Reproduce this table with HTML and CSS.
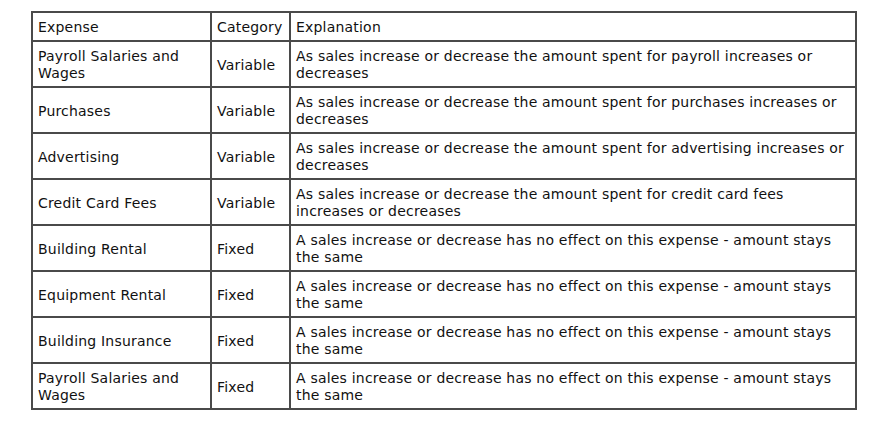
FILE: index.html
```html
<!DOCTYPE html>
<html>
<head>
<meta charset="utf-8">
<link rel="stylesheet" href="styles.css">
</head>
<body>
<table class="expenses">
  <colgroup>
    <col class="c-expense">
    <col class="c-category">
    <col class="c-explanation">
  </colgroup>
  <tr class="head"><td>Expense</td><td>Category</td><td>Explanation</td></tr>
  <tr><td>Payroll Salaries and Wages</td><td>Variable</td><td>As sales increase or decrease the amount spent for payroll increases or decreases</td></tr>
  <tr><td>Purchases</td><td>Variable</td><td>As sales increase or decrease the amount spent for purchases increases or decreases</td></tr>
  <tr><td>Advertising</td><td>Variable</td><td>As sales increase or decrease the amount spent for advertising increases or decreases</td></tr>
  <tr><td>Credit Card Fees</td><td>Variable</td><td>As sales increase or decrease the amount spent for credit card fees increases or decreases</td></tr>
  <tr><td>Building Rental</td><td>Fixed</td><td>A sales increase or decrease has no effect on this expense - amount stays the same</td></tr>
  <tr><td>Equipment Rental</td><td>Fixed</td><td>A sales increase or decrease has no effect on this expense - amount stays the same</td></tr>
  <tr><td>Building Insurance</td><td>Fixed</td><td>A sales increase or decrease has no effect on this expense - amount stays the same</td></tr>
  <tr><td>Payroll Salaries and Wages</td><td>Fixed</td><td>A sales increase or decrease has no effect on this expense - amount stays the same</td></tr>
</table>
</body>
</html>
```
FILE: styles.css
```css
html, body {
  margin: 0;
  background: #fff;
}
body {
  padding: 11px 0 0 31px;
  font-family: "DejaVu Sans", Verdana, sans-serif;
  font-size: 14px;
  line-height: 17px;
  letter-spacing: 0.2px;
  color: #111;
}
.expenses {
  border-collapse: collapse;
  table-layout: fixed;
  width: 824px;
  border: 2px solid #4a4a4a;
}
.c-expense { width: 179px; }
.c-category { width: 79px; }
.c-explanation { width: 566px; }
.expenses td {
  border: 2px solid #4a4a4a;
  padding: 6px 5px 4px;
  vertical-align: middle;
  text-align: left;
}
```
